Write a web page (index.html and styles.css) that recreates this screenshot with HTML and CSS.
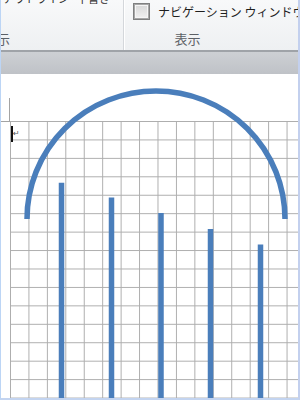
FILE: index.html
```html
<!DOCTYPE html>
<html lang="ja">
  <head>
    <meta charset="UTF-8" />
    <meta name="viewport" content="width=device-width, initial-scale=1.0" />
    <title>表示</title>

    <link rel="stylesheet" href="styles.css">
  </head>
  <body>
    <div class="window">
      <div class="ribbon">
        <div class="group group-doc">
          <div class="doc-buttons">
            <span>アウトライン</span>
            <span>下書き</span>
          </div>
          <div class="group-label label-doc">文書の表示</div>
        </div>
        <div class="group group-show">
          <label class="check">
            <span class="box"></span>
            <span>ナビゲーション ウィンドウ</span>
          </label>
          <div class="group-label">表示</div>
        </div>
      </div>
      <div class="ribbon-edge"></div>
      <div class="ribbon-band"></div>

      <div class="page">
        <div class="corner"></div>
        <div class="grid">
          <div class="cursor-line">
            <span class="caret"></span><span class="para">↵</span>
          </div>
        </div>

        <!-- shapes drawn on the page -->
        <svg class="shapes" viewBox="0 0 297 324" width="297" height="324">
          <path d="M 26 145 A 129 128 0 0 1 284 145" />
          <line x1="60.5" y1="108.7" x2="60.5" y2="324" />
          <line x1="110.5" y1="123.5" x2="110.5" y2="324" />
          <line x1="160" y1="139" x2="160" y2="324" />
          <line x1="209.5" y1="155" x2="209.5" y2="324" />
          <line x1="259.5" y1="170.5" x2="259.5" y2="324" />
        </svg>
      </div>
    </div>
  </body>
</html>
```

FILE: styles.css
```css
*,
*::before,
*::after {
  padding: 0;
  margin: 0;
  box-sizing: border-box;
}

body {
  background-color: #ffffff;
  font-family: "Noto Sans CJK JP", "Noto Sans", sans-serif;
}

.window {
  width: 300px;
  height: 400px;
  display: flex;
  flex-direction: column;
  overflow: hidden;
  border-left: 1px solid #bcd5f5;
  border-right: 2px solid #c3d0ee;
  border-bottom: 2px solid #c3d4f0;
}

/* ribbon */
.ribbon {
  height: 50px;
  flex-shrink: 0;
  display: flex;
  background: linear-gradient(#f8f9fa, #eef0f2);
}
.group {
  height: 50px;
  display: flex;
  flex-direction: column;
  justify-content: space-between;
  flex-shrink: 0;
}
.group-doc {
  width: 123px;
  overflow: hidden;
  border-right: 1px solid #d4d7db;
  box-shadow: 1px 0 0 #ffffff;
}
.doc-buttons {
  margin-top: -8px;
  padding-left: 2px;
  display: flex;
  gap: 8px;
  height: 13px;
  line-height: 13px;
  font-size: 11px;
  color: #2b2b2b;
  white-space: nowrap;
}
.group-label {
  font-size: 13px;
  line-height: 16px;
  padding-bottom: 3px;
  color: #5c6066;
  text-align: center;
  white-space: nowrap;
}
.label-doc {
  text-align: left;
  margin-left: -56px;
}
.group-show {
  width: 127px;
}
.check {
  display: flex;
  align-items: center;
  gap: 8px;
  padding: 3px 0 0 9px;
  font-size: 12px;
  color: #1e1e1e;
  white-space: nowrap;
}
.box {
  width: 17px;
  height: 17px;
  flex-shrink: 0;
  border: 1px solid #7f8080;
  background: linear-gradient(#d6d6d6, #f2f2f2);
  box-shadow: inset 0 0 0 1px #a7a7a7, inset 0 0 0 2px #f5f5f5;
}
.ribbon-edge {
  height: 2px;
  flex-shrink: 0;
  background: #9fa3a8;
}
.ribbon-band {
  height: 22px;
  flex-shrink: 0;
  background: linear-gradient(#cdd0d4, #bfc2c7);
}

/* page */
.page {
  flex: 1;
  position: relative;
  display: flex;
  flex-direction: column;
  background-color: #ffffff;
}
.corner {
  width: 9px;
  height: 24px;
  margin-top: 24px;
  border-right: 1px solid #a3a3a3;
  border-bottom: 1px solid #a3a3a3;
}
.grid {
  flex: 1;
  margin-top: -1px;
  margin-left: 9px;
  background-image: linear-gradient(to right, #adadad 1px, transparent 1px),
    linear-gradient(#adadad 1px, transparent 1px);
  background-size: 18.45px 18.45px;
}
.cursor-line {
  display: flex;
  align-items: flex-start;
  padding: 5px 0 0 1px;
}
.caret {
  width: 2px;
  height: 16px;
  background: #111111;
}
.para {
  font-family: "DejaVu Sans", sans-serif;
  font-size: 8px;
  line-height: 10px;
  margin-top: 3px;
  color: #555555;
}
.shapes {
  position: absolute;
  left: 0;
  top: 0;
  fill: none;
  stroke: #4a7ebb;
  stroke-width: 5.5;
}
```
